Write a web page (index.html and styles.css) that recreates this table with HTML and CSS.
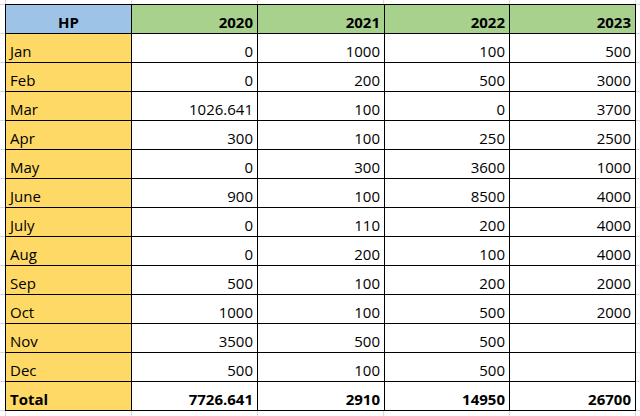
FILE: index.html
```html
<!DOCTYPE html>
<html>
<head>
<meta charset="utf-8">
<link rel="stylesheet" href="styles.css">
</head>
<body>
<div class="sheet">
  <div class="c hd-name">HP</div>
  <div class="c hd-year">2020</div>
  <div class="c hd-year">2021</div>
  <div class="c hd-year">2022</div>
  <div class="c hd-year">2023</div>

  <div class="c m">Jan</div><div class="c n">0</div><div class="c n">1000</div><div class="c n">100</div><div class="c n">500</div>
  <div class="c m">Feb</div><div class="c n">0</div><div class="c n">200</div><div class="c n">500</div><div class="c n">3000</div>
  <div class="c m">Mar</div><div class="c n">1026.641</div><div class="c n">100</div><div class="c n">0</div><div class="c n">3700</div>
  <div class="c m">Apr</div><div class="c n">300</div><div class="c n">100</div><div class="c n">250</div><div class="c n">2500</div>
  <div class="c m">May</div><div class="c n">0</div><div class="c n">300</div><div class="c n">3600</div><div class="c n">1000</div>
  <div class="c m">June</div><div class="c n">900</div><div class="c n">100</div><div class="c n">8500</div><div class="c n">4000</div>
  <div class="c m">July</div><div class="c n">0</div><div class="c n">110</div><div class="c n">200</div><div class="c n">4000</div>
  <div class="c m">Aug</div><div class="c n">0</div><div class="c n">200</div><div class="c n">100</div><div class="c n">4000</div>
  <div class="c m">Sep</div><div class="c n">500</div><div class="c n">100</div><div class="c n">200</div><div class="c n">2000</div>
  <div class="c m">Oct</div><div class="c n">1000</div><div class="c n">100</div><div class="c n">500</div><div class="c n">2000</div>
  <div class="c m">Nov</div><div class="c n">3500</div><div class="c n">500</div><div class="c n">500</div><div class="c n"></div>
  <div class="c m">Dec</div><div class="c n">500</div><div class="c n">100</div><div class="c n">500</div><div class="c n"></div>

  <div class="c m b">Total</div><div class="c n b">7726.641</div><div class="c n b">2910</div><div class="c n b">14950</div><div class="c n b">26700</div>
</div>
</body>
</html>
```
FILE: styles.css
```css
html, body {
  margin: 0;
  padding: 0;
}
body {
  width: 640px;
  height: 416px;
  overflow: hidden;
  background-color: #fff;
  background-image:
    repeating-linear-gradient(to bottom, transparent 0, transparent 4px, #dadada 4px, #dadada 5px, transparent 5px, transparent 29px),
    repeating-linear-gradient(to right, transparent 0, transparent 5px, #dadada 5px, #dadada 6px, transparent 6px, transparent 126px);
  font-family: "Open Sans", "Noto Sans", sans-serif;
  font-size: 15px;
  color: #000;
}
.sheet {
  display: inline-grid;
  grid-template-columns: 125px 125px 126px 124px 125px;
  grid-auto-rows: 28px;
  gap: 1px;
  padding: 1px;
  background: #000;
  margin: 4px 0 0 5px;
  vertical-align: top;
}
.c {
  display: flex;
  align-items: flex-end;
  line-height: 20px;
  padding: 0 4px 1px 4px;
  background: #fff;
  white-space: nowrap;
}
.hd-name {
  background: #9dc3e6;
  justify-content: center;
  font-weight: 700;
}
.hd-year {
  background: #a9d18e;
  justify-content: flex-end;
  font-weight: 700;
}
.m {
  background: #ffd966;
  justify-content: flex-start;
}
.n {
  justify-content: flex-end;
}
.b {
  font-weight: 700;
}
```
